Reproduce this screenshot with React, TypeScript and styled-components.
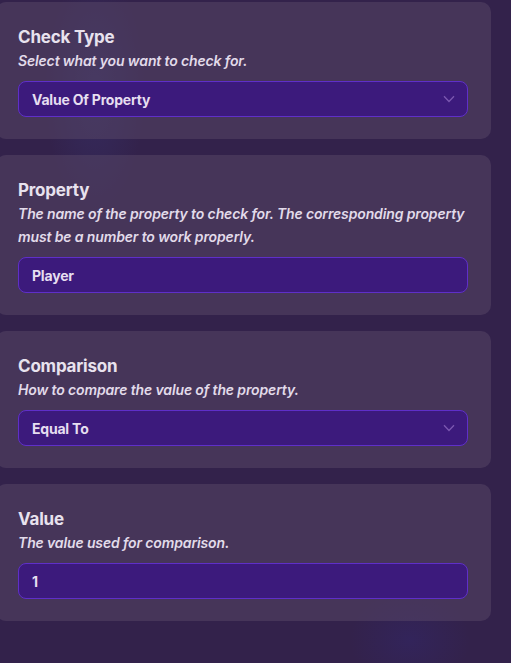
import * as React from "react";
import styled, { createGlobalStyle } from "styled-components";

const GlobalStyle = createGlobalStyle`
  html, body {
    margin: 0;
    padding: 0;
    background: #33224b;
    font-family: Inter, "Noto Sans", "Liberation Sans", sans-serif;
    overflow: hidden;
  }
`;

const Page = styled.div`
  display: flex;
  flex-direction: column;
  gap: 16px;
  padding-top: 2px;
  width: 511px;
  min-height: 663px;
  box-sizing: border-box;
  background:
    radial-gradient(ellipse 50px 120px at 95px 90px, rgba(60, 70, 150, 0.25), transparent),
    radial-gradient(ellipse 60px 50px at 410px 640px, rgba(50, 40, 120, 0.35), transparent),
    #33224b;
`;

const Card = styled.div`
  margin-left: -4px;
  width: 495px;
  box-sizing: border-box;
  padding: 24px 23px 22px 22px;
  border-radius: 10px;
  background: rgba(86, 70, 102, 0.55);
  display: flex;
  flex-direction: column;
`;

const Title = styled.div`
  font-size: 17px;
  line-height: 22px;
  font-weight: 700;
  color: #e8e2ee;
  letter-spacing: -0.2px;
`;

const Description = styled.div`
  margin-top: 1px;
  font-size: 14px;
  line-height: 23px;
  font-style: italic;
  font-weight: 600;
  color: #e2dbea;
  letter-spacing: -0.13px;
`;

const Field = styled.div`
  margin-top: 9px;
  height: 36px;
  box-sizing: border-box;
  border: 1px solid #5f2fc9;
  border-radius: 8px;
  background: #3c1a7c;
  display: flex;
  align-items: center;
  justify-content: space-between;
  padding: 0 12px 0 13px;
  font-size: 14px;
  font-weight: 700;
  letter-spacing: -0.2px;
  color: #e6def0;
`;

const Chevron = () => (
  <svg width="12" height="8" viewBox="0 0 12 8" fill="none">
    <path d="M1 1.2 L6 6.5 L11 1.2" stroke="#7b58b0" strokeWidth="1.3" />
  </svg>
);

type Setting = {
  title: string;
  description: string;
  value: string;
  select?: boolean;
};

const settings: Setting[] = [
  {
    title: "Check Type",
    description: "Select what you want to check for.",
    value: "Value Of Property",
    select: true,
  },
  {
    title: "Property",
    description:
      "The name of the property to check for. The corresponding property must be a number to work properly.",
    value: "Player",
  },
  {
    title: "Comparison",
    description: "How to compare the value of the property.",
    value: "Equal To",
    select: true,
  },
  {
    title: "Value",
    description: "The value used for comparison.",
    value: "1",
  },
];

export default function App() {
  return (
    <>
      <GlobalStyle />
      <Page>
        {settings.map((s) => (
          <Card key={s.title}>
            <Title>{s.title}</Title>
            <Description>{s.description}</Description>
            <Field>
              <span>{s.value}</span>
              {s.select && <Chevron />}
            </Field>
          </Card>
        ))}
      </Page>
    </>
  );
}
